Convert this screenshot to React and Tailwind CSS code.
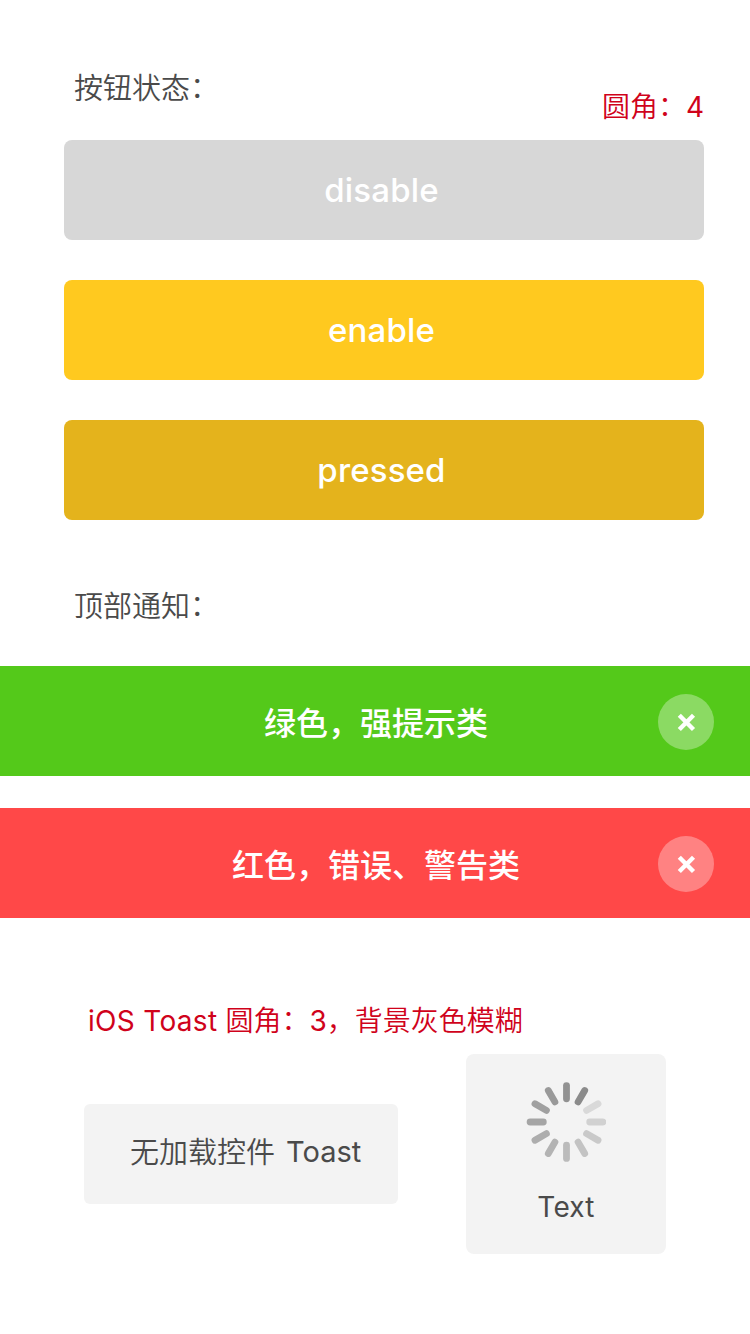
import React from 'react';

const sans = "font-['Inter','Noto_Sans_CJK_SC',sans-serif]";
const cjk = "font-['Noto_Sans_CJK_SC',sans-serif]";

function Colon() {
  return <span className="relative -top-px">：</span>;
}

function Button({ className, label }) {
  return (
    <button
      className={`flex h-[100px] w-[640px] items-center justify-center rounded-lg pt-px pr-[5px] text-[33px] leading-[99px] font-[480] tracking-[0.15px] text-white ${className}`}
    >
      {label}
    </button>
  );
}

function CloseButton() {
  return (
    <button aria-label="close" className="flex size-14 items-center justify-center rounded-full bg-white/32">
      <svg width="56" height="56" viewBox="0 0 56 56" fill="none" stroke="#fff" strokeWidth="4.4">
        <path d="M21.3 21.3 35.5 35.5M35.5 21.3 21.3 35.5" />
      </svg>
    </button>
  );
}

function Notice({ className, children }) {
  return (
    <div className={`grid h-[110px] grid-cols-[94px_1fr_92px] items-center pt-[2px] text-white ${className}`}>
      <span />
      <p className={`pb-[3px] text-center text-[32px] leading-[48px] font-[450] whitespace-nowrap ${cjk}`}>{children}</p>
      <CloseButton />
    </div>
  );
}

const spokes = [
  '#929292', '#8b8b8b', '#d9d9d9', '#d1d1d1', '#c9c9c9', '#c3c3c3',
  '#bbbbbb', '#b3b3b3', '#adadad', '#a5a5a5', '#a0a0a0', '#999999',
];

function Spinner() {
  return (
    <svg width="80" height="80" viewBox="0 0 80 80" strokeWidth="6.8" strokeLinecap="round">
      {spokes.map((color, i) => (
        <line key={i} x1="40.5" y1="3.6" x2="40.5" y2="16.8" stroke={color} transform={`rotate(${i * 30} 40.5 40)`} />
      ))}
    </svg>
  );
}

export default function App() {
  return (
    <main className={`flex h-[1334px] w-[750px] flex-col overflow-hidden bg-white text-[#4a4a4a] ${sans}`}>
      <header className="flex h-[140px] items-start justify-between pr-[46px] pl-[74px]">
        <h2 className={`pt-[65px] text-[29px] leading-[42px] font-[350] ${cjk}`}>按钮状态<Colon /></h2>
        <p className="pt-[87px] text-[28px] leading-[40px] font-[350] text-[#d0021b]">
          圆角<Colon /><span className="font-normal">4</span>
        </p>
      </header>

      <section className="flex flex-col gap-10 pl-16">
        <Button className="bg-[#d7d7d7]" label="disable" />
        <Button className="bg-[#ffc91f]" label="enable" />
        <Button className="bg-[#e4b31c]" label="pressed" />
      </section>

      <h2 className={`h-[146px] pt-[63px] pl-[74px] text-[29px] leading-[42px] font-[350] ${cjk}`}>顶部通知<Colon /></h2>

      <section className="flex flex-col gap-8">
        <Notice className="bg-[#54c91a]">绿色，强提示类</Notice>
        <Notice className="bg-[#ff4848]">红色，错误、警告类</Notice>
      </section>

      <p className="h-[136px] pt-[83px] pl-[88px] text-[28px] leading-[40px] font-[350] whitespace-nowrap text-[#d0021b]">
        <span className="font-normal tracking-[0.3px]">iOS Toast </span>圆角<Colon /><span className="font-normal">3</span>，背景灰色模糊
      </p>

      <section className="flex items-center pl-[84px]">
        <div className="flex h-[100px] w-[314px] items-center rounded-md bg-[#f3f3f3] pb-[3px] pl-[46px] text-[29px] leading-[42px] font-[350] whitespace-nowrap">
          <span>无加载控件</span>
          <span className="relative -top-px pl-[11px] font-normal">Toast</span>
        </div>
        <div className="ml-[68px] flex h-[200px] w-[200px] flex-col items-center rounded-lg bg-[#f3f3f3] pt-7">
          <Spinner />
          <p className="mt-[25px] text-[28px] leading-[40px] font-normal tracking-[0.2px]">Text</p>
        </div>
      </section>
    </main>
  );
}
